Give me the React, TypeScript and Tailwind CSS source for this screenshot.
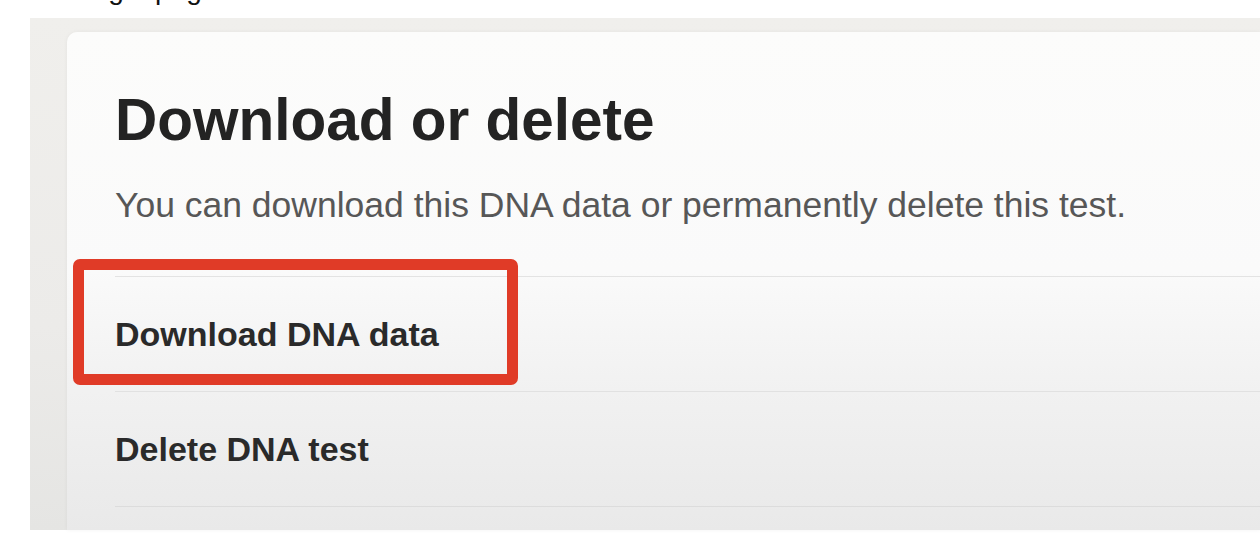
import React from "react";

export default function App() {
  return (
    <div
      className="w-[1260px] h-[538px] bg-white overflow-hidden"
      style={{ fontFamily: '"Liberation Sans", Arial, sans-serif' }}
    >
      {/* top strip with clipped text from the line above */}
      <div className="h-[18px] overflow-hidden">
        <div className="-mt-[24px] pl-[57px] text-[28px] leading-[28px] text-[#111] whitespace-nowrap">
          using a page
        </div>
      </div>

      {/* gray outer panel */}
      <div className="ml-[30px] h-[512px] pl-[37px] pt-[14px] bg-[linear-gradient(to_bottom,#f0efec_0%,#ecebe9_60%,#e5e5e3_100%)]">
        {/* card */}
        <div className="h-full rounded-tl-[10px] pl-[48px] pt-[59px] shadow-[0_0_4px_rgba(0,0,0,0.05)] bg-[linear-gradient(to_bottom,#fcfcfb_0%,#fafafa_48%,#f1f1f1_72%,#e9e9e9_100%)]">
          <h1 className="text-[58.5px] leading-[58px] font-bold text-[#232323] whitespace-nowrap">
            Download or delete
          </h1>
          <p className="mt-[39px] text-[35.5px] leading-[35px] text-[#575757] whitespace-nowrap">
            You can download this DNA data or permanently delete this test.
          </p>

          <div className="mt-[53px]">
            <div className="relative h-[115px] border-t border-[#e3e3e3] flex items-center">
              <span className="text-[34px] leading-[34px] font-bold text-[#2a2a2a] whitespace-nowrap">
                Download DNA data
              </span>
              <div className="absolute -left-[42px] -top-[18px] w-[445px] h-[126px] border-[11px] border-[#e03b27] rounded-[7px]" />
            </div>
            <div className="h-[115px] border-t border-[#e1e1e1] flex items-center">
              <span className="text-[34px] leading-[34px] font-bold text-[#2a2a2a] whitespace-nowrap">
                Delete DNA test
              </span>
            </div>
            <div className="border-t border-[#dcdcdc]" />
          </div>
        </div>
      </div>
    </div>
  );
}
